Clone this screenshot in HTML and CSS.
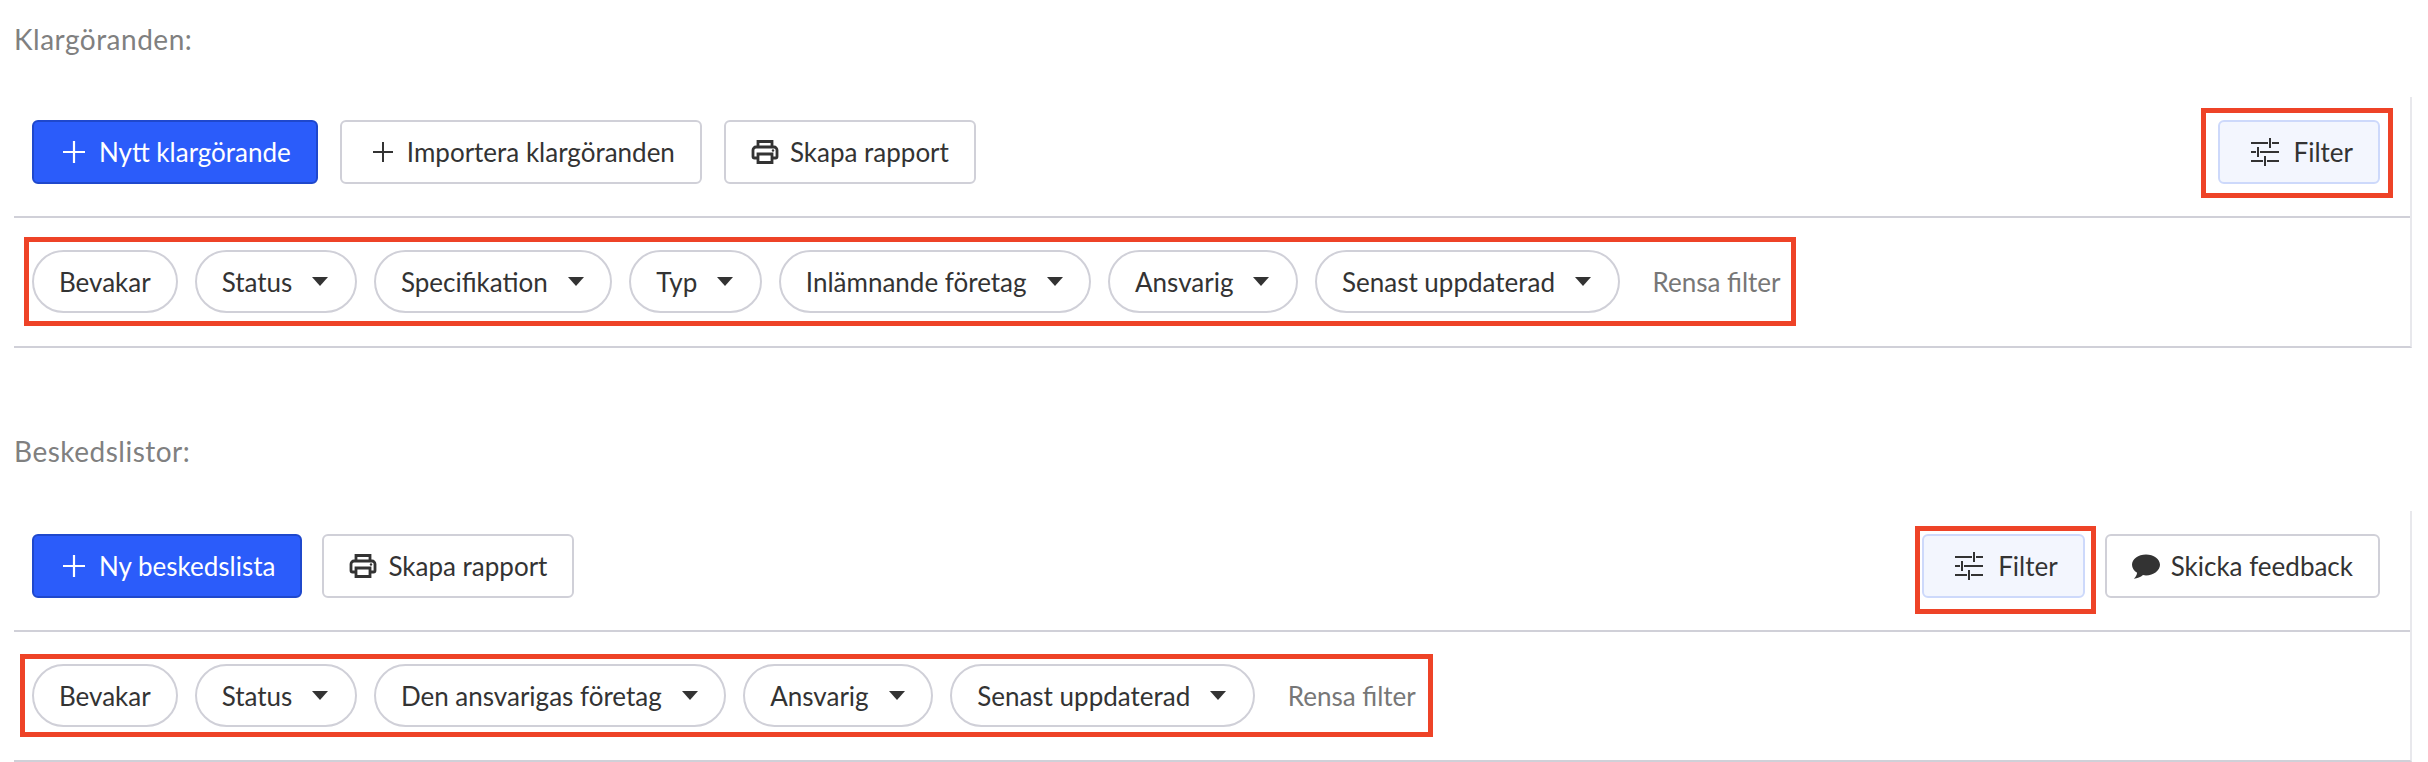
FILE: index.html
```html
<!DOCTYPE html>
<html lang="en">
<head>
    <meta charset="UTF-8">
    <title>Klargöranden</title>
    <link rel="stylesheet" href="styles.css">
</head>
<body>

<!-- Klargöranden -->
<h2 class="heading">Klargöranden:</h2>
<section class="panel">
    <div class="toolbar">
        <div class="actions">
            <button class="btn primary">
                <svg class="icon plus" viewBox="0 0 24 24"><path d="M12 0v24M0 12h24" fill="none" stroke="currentColor" stroke-width="2.4"/></svg>
                Nytt klargörande
            </button>
            <button class="btn">
                <svg class="icon plus small" viewBox="0 0 24 24"><path d="M12 0v24M0 12h24" fill="none" stroke="currentColor" stroke-width="2.4"/></svg>
                Importera klargöranden
            </button>
            <button class="btn">
                <svg class="icon print" viewBox="0 0 28 24"><path d="M7 7V1.500h14V7M7 18H3.500A1.500 1.500 0 0 1 2 16.500V10a3 3 0 0 1 3-3h18a3 3 0 0 1 3 3v6.500a1.500 1.500 0 0 1-1.500 1.500H21M7 14h14v8.500H7z" fill="none" stroke="currentColor" stroke-width="2.800"/><circle cx="22" cy="10.500" r="1.200" fill="currentColor"/></svg>
                Skapa rapport
            </button>
        </div>
        <div class="actions">
            <button class="btn filter marked mark-filter-a">
                <svg class="icon sliders" viewBox="0 0 28 28"><path d="M0 5h17M21 5h7M19 0v10M0 14h5M9 14h19M7 9v10M0 23h12M16 23h12M14 18v10" fill="none" stroke="currentColor" stroke-width="2"/></svg>
                Filter
            </button>
        </div>
    </div>
    <div class="filters">
        <div class="pills marked mark-pills-a">
            <button class="pill">Bevakar</button>
            <button class="pill has-caret">Status <span class="caret"></span></button>
            <button class="pill has-caret">Specifikation <span class="caret"></span></button>
            <button class="pill has-caret">Typ <span class="caret"></span></button>
            <button class="pill has-caret">Inlämnande företag <span class="caret"></span></button>
            <button class="pill has-caret">Ansvarig <span class="caret"></span></button>
            <button class="pill has-caret">Senast uppdaterad <span class="caret"></span></button>
            <a href="#" class="clear">Rensa filter</a>
        </div>
    </div>
</section>

<!-- Beskedslistor -->
<h2 class="heading second">Beskedslistor:</h2>
<section class="panel">
    <div class="toolbar">
        <div class="actions tight">
            <button class="btn primary">
                <svg class="icon plus" viewBox="0 0 24 24"><path d="M12 0v24M0 12h24" fill="none" stroke="currentColor" stroke-width="2.4"/></svg>
                Ny beskedslista
            </button>
            <button class="btn">
                <svg class="icon print" viewBox="0 0 28 24"><path d="M7 7V1.500h14V7M7 18H3.500A1.500 1.500 0 0 1 2 16.500V10a3 3 0 0 1 3-3h18a3 3 0 0 1 3 3v6.500a1.500 1.500 0 0 1-1.500 1.500H21M7 14h14v8.500H7z" fill="none" stroke="currentColor" stroke-width="2.800"/><circle cx="22" cy="10.500" r="1.200" fill="currentColor"/></svg>
                Skapa rapport
            </button>
        </div>
        <div class="actions tight">
            <button class="btn filter marked mark-filter-b">
                <svg class="icon sliders" viewBox="0 0 28 28"><path d="M0 5h17M21 5h7M19 0v10M0 14h5M9 14h19M7 9v10M0 23h12M16 23h12M14 18v10" fill="none" stroke="currentColor" stroke-width="2"/></svg>
                Filter
            </button>
            <button class="btn">
                <svg class="icon comment" viewBox="0 0 28 25"><path d="M14 .5C6.300.5 0 5.100 0 10.800c0 3.200 2 6.100 5.100 8-.3 2.300-1.500 4.400-3.300 6 3.500-.3 6.800-1.500 9.200-3.700 1 .2 2 .3 3 .3 7.700 0 14-4.900 14-10.600S21.700.5 14 .5z" fill="currentColor"/></svg>
                Skicka feedback
            </button>
        </div>
    </div>
    <div class="filters">
        <div class="pills marked mark-pills-b">
            <button class="pill">Bevakar</button>
            <button class="pill has-caret">Status <span class="caret"></span></button>
            <button class="pill has-caret">Den ansvarigas företag <span class="caret"></span></button>
            <button class="pill has-caret">Ansvarig <span class="caret"></span></button>
            <button class="pill has-caret">Senast uppdaterad <span class="caret"></span></button>
            <a href="#" class="clear">Rensa filter</a>
        </div>
    </div>
</section>

</body>
</html>
```

FILE: styles.css
```css
body {
    font-family: Lato, "Open Sans", sans-serif;
    font-size: 26px;
    color: #333333;
    background-color: white;
    margin: 0;
    padding: 0 16px 0 14px;
}

.heading {
    font-size: 28px;
    font-weight: 400;
    line-height: 34px;
    letter-spacing: 0.5px;
    color: #808080;
    margin: 0;
    padding-top: 22px;
    height: 97px;
    box-sizing: border-box;
}

.heading.second {
    padding-top: 0;
    height: 77px;
    margin-top: 86px;
}

.panel {
    border-right: 2px solid #e8e8ec;
    border-bottom: 2px solid #d0d0d8;
}

.toolbar {
    display: flex;
    justify-content: space-between;
    padding: 23px 30px 32px 18px;
    border-bottom: 2px solid #d0d0d8;
}

.actions {
    display: flex;
    gap: 22px;
}

.actions.tight {
    gap: 20px;
}

.btn {
    display: flex;
    align-items: center;
    gap: 11px;
    height: 64px;
    padding: 0 25px;
    font: inherit;
    color: #333333;
    background-color: white;
    border: 2px solid #d0d0d8;
    border-radius: 6px;
}

.icon {
    flex: none;
}

.plus {
    width: 22px;
    height: 22px;
    margin: 0 3px 0 4px;
}

.plus.small {
    width: 20px;
    height: 22px;
    margin-left: 6px;
}

.print {
    width: 28px;
    height: 24px;
}

.sliders {
    width: 28px;
    height: 28px;
    margin: 0 4px 0 6px;
}

.comment {
    width: 28px;
    height: 25px;
}

.primary {
    color: white;
    background-color: #2b5cfa;
    border-color: #1f48cc;
}

.filter {
    background-color: #f3f6fe;
    border-color: #cdd9fb;
}

.filters {
    padding: 32px 18px 33px;
}

.pills {
    display: inline-flex;
    align-items: center;
    gap: 17px;
}

.pill {
    display: flex;
    align-items: center;
    gap: 20px;
    height: 63px;
    padding: 0 25px;
    font: inherit;
    color: #333333;
    background-color: white;
    border: 2px solid #d0d0d8;
    border-radius: 32px;
}

.has-caret {
    padding-right: 26.5px;
}

.caret {
    width: 0;
    height: 0;
    border-left: 8px solid transparent;
    border-right: 8px solid transparent;
    border-top: 9px solid #333333;
}

.clear {
    color: #777777;
    text-decoration: none;
    margin-left: 16px;
}

/* Red annotation frames, drawn over the page */
.marked {
    position: relative;
}

.marked::after {
    content: "";
    position: absolute;
    border: 5px solid #ee4327;
}

.mark-filter-a::after {
    inset: -14px -15px -16px -19px;
}

.mark-filter-b::after {
    inset: -10px -13px -18px -9px;
}

.mark-pills-a::after {
    inset: -13px -15px -13px -8px;
}

.mark-pills-b::after {
    inset: -10px -17px -10px -12px;
}
```
